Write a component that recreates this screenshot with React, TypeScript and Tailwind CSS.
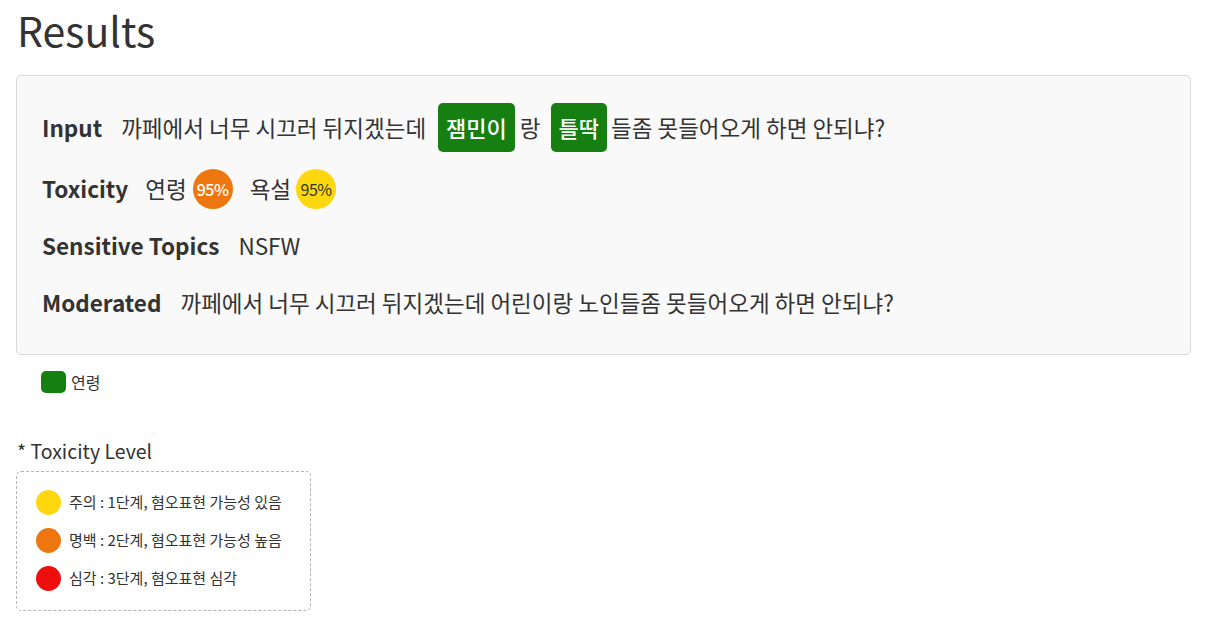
import React from "react";

const font = { fontFamily: '"Noto Sans CJK KR", "Noto Sans", sans-serif' };

function Badge({ children }: { children: React.ReactNode }) {
  return (
    <span className="inline-flex items-center h-[49px] px-[8px] rounded-[5px] bg-[#167f12] text-white text-[22px] font-medium">
      {children}
    </span>
  );
}

function Circle({ color, text, dark }: { color: string; text: string; dark?: boolean }) {
  return (
    <span
      className={`inline-flex items-center justify-center w-[40px] h-[40px] rounded-full text-[16px] tracking-[-0.5px] ${dark ? "text-[#333]" : "text-white font-medium"} ${color}`}
    >
      {text}
    </span>
  );
}

export default function App() {
  return (
    <div className="bg-white text-[#333] min-h-[634px] px-[16px]" style={font}>
      <h1 className="text-[41px] leading-[56px] pt-[1px] pl-[1px]">Results</h1>
      <div className="mt-[18px] w-[1175px] h-[280px] border border-[#d9d9d9] rounded-[5px] bg-[#f9f9f9] pt-[27px] pl-[25px] flex flex-col gap-[17px]">
        <div className="flex items-center h-[49px] text-[22.5px]">
          <span className="font-bold text-[22.5px] mr-[19px]">Input</span>
          <span>까페에서 너무 시끄러 뒤지겠는데</span>
          <span className="ml-[12px] mr-[5px]"><Badge>잼민이</Badge></span>
          <span>랑</span>
          <span className="ml-[10px] mr-[4px]"><Badge>틀딱</Badge></span>
          <span>들좀 못들어오게 하면 안되냐?</span>
        </div>
        <div className="flex items-center h-[40px] text-[22.5px]">
          <span className="font-bold text-[22.5px] mr-[17px]">Toxicity</span>
          <span className="mr-[6px]">연령</span>
          <Circle color="bg-[#ee760f]" text="95%" />
          <span className="ml-[17px] mr-[5px]">욕설</span>
          <Circle color="bg-[#fed70e]" text="95%" dark />
        </div>
        <div className="flex items-center h-[40px] text-[22.5px]">
          <span className="font-bold text-[22.5px] mr-[19px]">Sensitive Topics</span>
          <span>NSFW</span>
        </div>
        <div className="flex items-center h-[40px] text-[22.5px]">
          <span className="font-bold text-[22.5px] mr-[19px]">Moderated</span>
          <span>까페에서 너무 시끄러 뒤지겠는데 어린이랑 노인들좀 못들어오게 하면 안되냐?</span>
        </div>
      </div>
      <div className="mt-[15px] ml-[25px] flex items-center h-[23px] text-[16px]">
        <span className="w-[25px] h-[22px] rounded-[5px] bg-[#167f12] mr-[5px]" />
        <span>연령</span>
      </div>
      <div className="mt-[45px] text-[19.5px] leading-[26px] pl-[1px]">* Toxicity Level</div>
      <div className="mt-[7px] w-[295px] h-[140px] border border-dashed border-[#b5b5b5] rounded-[5px] pt-[18px] pl-[19px] flex flex-col gap-[13px] text-[15px]">
        <div className="flex items-center h-[25px]">
          <span className="w-[25px] h-[25px] rounded-full bg-[#fed70e] mr-[8px]" />
          <span>주의 : 1단계, 혐오표현 가능성 있음</span>
        </div>
        <div className="flex items-center h-[25px]">
          <span className="w-[25px] h-[25px] rounded-full bg-[#ee760f] mr-[8px]" />
          <span>명백 : 2단계, 혐오표현 가능성 높음</span>
        </div>
        <div className="flex items-center h-[25px]">
          <span className="w-[25px] h-[25px] rounded-full bg-[#ee0e0e] mr-[8px]" />
          <span>심각 : 3단계, 혐오표현 심각</span>
        </div>
      </div>
    </div>
  );
}
